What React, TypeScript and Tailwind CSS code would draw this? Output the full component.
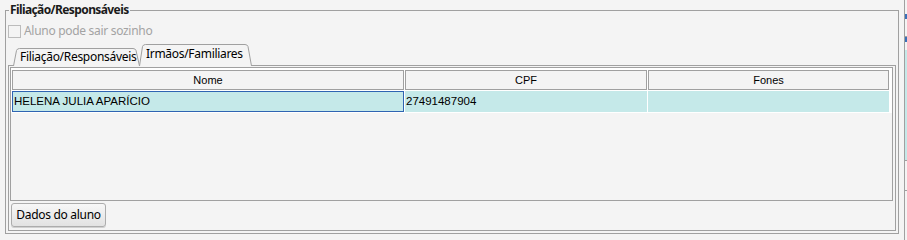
import React from 'react'

const ui = "font-['Noto_Sans','Open_Sans',sans-serif] tracking-[-0.3px]"
const cellFont = "font-['Liberation_Sans','Arial',sans-serif] tracking-normal"

type Col = { key: string; title: string; width: string }

const COLS: Col[] = [
  { key: 'nome', title: 'Nome', width: 'w-[392px]' },
  { key: 'cpf', title: 'CPF', width: 'w-[242px]' },
  { key: 'fones', title: 'Fones', width: 'w-[241px]' },
]

const ROWS = [{ nome: 'HELENA JULIA APARÍCIO', cpf: '27491487904', fones: '' }]

function Tab({ label, active, width }: { label: string; active?: boolean; width: number }) {
  const h = active ? 22 : 18
  const w = width
  // slanted-edge tab outline
  const d = `M0.5 ${h} L3.5 2.5 Q4.2 0.5 6.5 0.5 L${w - 7} 0.5 Q${w - 4.7} 0.5 ${w - 4} 2.5 L${w - 0.5} ${h}`
  return (
    <div
      className={`relative shrink-0 ${active ? 'z-10 -ml-px h-[22px]' : 'h-[18px]'}`}
      style={{ width: w }}
    >
      <svg aria-hidden className="absolute inset-0" width={w} height={h}>
        <path d={`${d} Z`} fill="#f4f4f4" stroke="none" />
        <path d={d} fill="none" stroke="#a0a0a0" strokeWidth="1" />
      </svg>
      <span
        className={`relative block whitespace-nowrap text-[12px] leading-4 text-black ${active ? 'pl-[7px] pt-[2px]' : 'pl-[7px] pt-[1px]'}`}
      >
        {label}
      </span>
    </div>
  )
}

export default function App() {
  return (
    <div className={`flex h-[240px] w-[907px] overflow-hidden bg-[#f4f4f4] ${ui}`}>
      <div className="w-[904px] shrink-0">
        <fieldset className="ml-[5px] mt-[2px] h-[232px] w-[894px] border border-[#a0a0a0] pb-0">
          <legend className="ml-[3px] px-[1px] text-[12px] font-bold leading-4 tracking-[-0.6px] text-[#1a1a1a]">
            Filiação/Responsáveis
          </legend>

          <label className="mt-[5px] flex items-center gap-[3px] pl-[2px]">
            <span className="h-[13px] w-[13px] border border-[#bcbcbc] bg-[#f4f4f4]" />
            <span className="text-[12px] leading-4 text-[#a3a3a3]">Aluno pode sair sozinho</span>
          </label>

          <div className="ml-[2px] mt-[5px]">
            <div className="flex h-[22px] items-end pl-[5px]">
              <Tab label="Filiação/Responsáveis" width={127} />
              <Tab label="Irmãos/Familiares" width={113} active />
            </div>

            <div className="-mt-px h-[166px] w-[888px] border border-[#a0a0a0] bg-[#f4f4f4]">
              <div className="ml-px mt-px h-[134px] w-[883px] border border-[#a0a0a0] bg-[#f4f4f4]">
                <div className={`flex flex-col gap-px bg-white pl-px pr-px pt-[2px] pb-px ${cellFont}`}>
                  <div className="flex gap-px">
                    {COLS.map((c) => (
                      <div
                        key={c.key}
                        className={`${c.width} flex h-[20px] items-center justify-center border border-[#a0a0a0] bg-[#f4f4f4] text-[11px] text-black`}
                      >
                        {c.title}
                      </div>
                    ))}
                  </div>
                  {ROWS.map((r) => (
                    <div key={r.nome} className="flex gap-px text-[11.5px]">
                      <div className="flex h-[21px] w-[392px] items-center border border-[#2f64b2] bg-[#c5e9e9] pl-px text-black">
                        {r.nome}
                      </div>
                      <div className="flex h-[21px] w-[242px] items-center bg-[#c5e9e9] pl-px text-black">
                        {r.cpf}
                      </div>
                      <div className="flex h-[21px] w-[241px] items-center bg-[#c5e9e9] text-black">
                        {r.fones}
                      </div>
                    </div>
                  ))}
                </div>
              </div>

              <button
                type="button"
                className="ml-[2px] mt-[2px] h-[24px] w-[95px] rounded-[3px] border border-[#acacac] bg-gradient-to-b from-[#f7f7f7] to-[#e2e2e2] text-[12px] leading-4 text-black shadow-[0_1px_0_#d0d0d0]"
              >
                Dados do aluno
              </button>
            </div>
          </div>
        </fieldset>
      </div>

      {/* edge of the neighbouring control, cut off by the window */}
      <div className="flex w-[3px] shrink-0 flex-col border-l border-[#a0a0a0]">
        <div className="h-[14px]" />
        <div className="h-[5px] bg-[#3a70b8]" />
        <div className="h-[18px] border-b border-[#a0a0a0]" />
        <div className="h-[5px] bg-[#3a70b8]" />
        <div className="h-[8px]" />
        <div className="h-[110px] bg-[#c5e9e9]" />
        <div className="h-[30px] border-t border-[#a0a0a0]" />
        <div className="flex-1 border-t border-[#a0a0a0]" />
      </div>
    </div>
  )
}
